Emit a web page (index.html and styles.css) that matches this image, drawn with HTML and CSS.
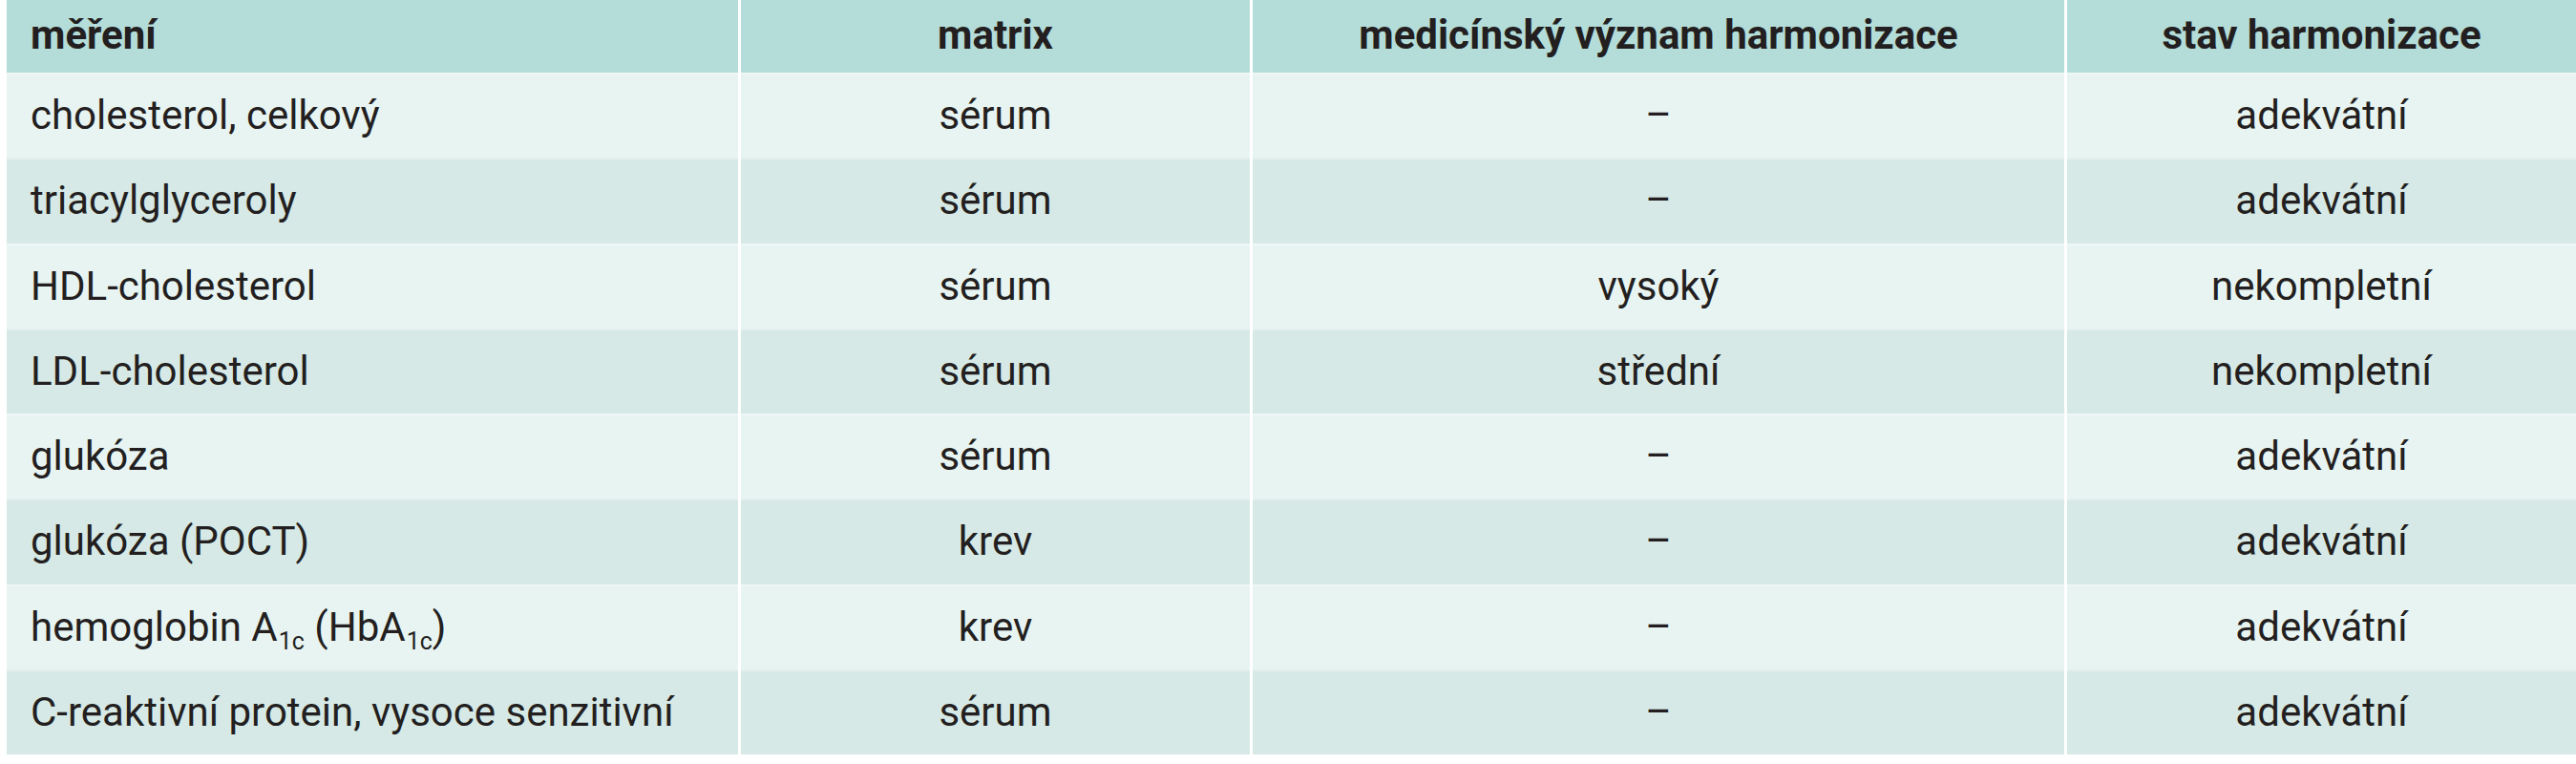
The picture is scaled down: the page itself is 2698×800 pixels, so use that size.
FILE: index.html
```html
<!DOCTYPE html>
<html lang="cs">
<head>
<meta charset="utf-8">
<title>Harmonizace měření</title>
<link rel="stylesheet" href="styles.css">
</head>
<body>
<div class="table" role="table">
  <div class="row head" role="row">
    <div class="cell first" role="columnheader">měření</div>
    <div class="cell" role="columnheader">matrix</div>
    <div class="cell" role="columnheader">medicínský význam harmonizace</div>
    <div class="cell" role="columnheader">stav harmonizace</div>
  </div>
  <div class="row odd" role="row">
    <div class="cell first">cholesterol, celkový</div>
    <div class="cell">sérum</div>
    <div class="cell">–</div>
    <div class="cell">adekvátní</div>
  </div>
  <div class="row even" role="row">
    <div class="cell first">triacylglyceroly</div>
    <div class="cell">sérum</div>
    <div class="cell">–</div>
    <div class="cell">adekvátní</div>
  </div>
  <div class="row odd" role="row">
    <div class="cell first">HDL-cholesterol</div>
    <div class="cell">sérum</div>
    <div class="cell">vysoký</div>
    <div class="cell">nekompletní</div>
  </div>
  <div class="row even" role="row">
    <div class="cell first">LDL-cholesterol</div>
    <div class="cell">sérum</div>
    <div class="cell">střední</div>
    <div class="cell">nekompletní</div>
  </div>
  <div class="row odd" role="row">
    <div class="cell first">glukóza</div>
    <div class="cell">sérum</div>
    <div class="cell">–</div>
    <div class="cell">adekvátní</div>
  </div>
  <div class="row even" role="row">
    <div class="cell first">glukóza (POCT)</div>
    <div class="cell">krev</div>
    <div class="cell">–</div>
    <div class="cell">adekvátní</div>
  </div>
  <div class="row odd" role="row">
    <div class="cell first"><span class="label">hemoglobin A<span class="sub">1c</span> (HbA<span class="sub">1c</span>)</span></div>
    <div class="cell">krev</div>
    <div class="cell">–</div>
    <div class="cell">adekvátní</div>
  </div>
  <div class="row even" role="row">
    <div class="cell first">C-reaktivní protein, vysoce senzitivní</div>
    <div class="cell">sérum</div>
    <div class="cell">–</div>
    <div class="cell">adekvátní</div>
  </div>
</div>
</body>
</html>
```
FILE: styles.css
```css
body {
  margin: 0;
  background: #ffffff;
  font-family: Roboto, "Liberation Sans", sans-serif;
  color: #231f20;
}

.table {
  margin-left: 7px;
  width: 2691px;
  display: flex;
  flex-direction: column;
}

.row {
  display: grid;
  grid-template-columns: 766px 536px 853px 1fr;
  height: 89.25px;
  font-size: 42px;
  box-shadow: inset 0 2px 0 rgba(255, 255, 255, 0.3);
}

.row.head {
  height: 76px;
  background: #b4dcd9;
  font-weight: 700;
  box-shadow: none;
}

.row.head .cell {
  padding-bottom: 4px;
}

.row.odd {
  background: #e8f4f2;
}

.row.even {
  background: #d6e9e6;
}

.cell {
  box-sizing: border-box;
  display: flex;
  align-items: center;
  justify-content: center;
  white-space: nowrap;
  border-left: 3px solid #ffffff;
}

.cell.first {
  justify-content: flex-start;
  padding-left: 25px;
  border-left: none;
}

.label {
  white-space: nowrap;
}

.sub {
  font-size: 25px;
  line-height: 0;
  position: relative;
  top: 9px;
  margin-left: 1px;
}
```
